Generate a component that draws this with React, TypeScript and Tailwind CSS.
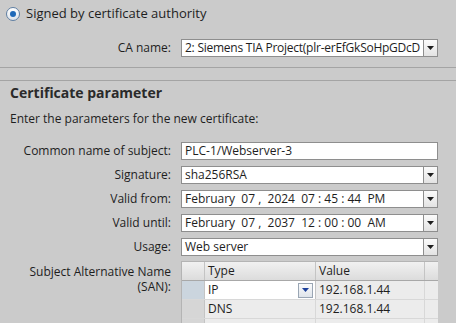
const font = { fontFamily: '"Open Sans", "Noto Sans", sans-serif' };

function Arrow({ color = "#1e1e1e" }: { color?: string }) {
  return (
    <svg width="7" height="4" viewBox="0 0 7 4">
      <path d="M0 0H7L3.5 4Z" fill={color} />
    </svg>
  );
}

function Field({ label, children }: { label: string; children: React.ReactNode }) {
  return (
    <div className="flex items-center h-[24px]">
      <div className="w-[181px] pr-[10px] text-right shrink-0">{label}</div>
      {children}
    </div>
  );
}

function TextBox({ value }: { value: string }) {
  return (
    <div className="w-[257px] h-[18px] bg-white border border-[#8e8e8e] flex items-center px-[3px] whitespace-pre overflow-hidden">
      {value}
    </div>
  );
}

function Select({ value, tight }: { value: string; tight?: boolean }) {
  return (
    <div className="w-[257px] h-[18px] bg-white border border-[#8e8e8e] flex items-stretch">
      <div className={`flex-1 flex items-center px-[3px] whitespace-pre overflow-hidden ${tight ? "tracking-[-0.25px]" : ""}`}>
        {value}
      </div>
      <div className="w-[14px] border-l border-[#8e8e8e] bg-gradient-to-b from-[#fbfbfb] to-[#e3e3e3] flex items-center justify-center">
        <Arrow />
      </div>
    </div>
  );
}

export default function App() {
  return (
    <div className="w-[456px] h-[323px] overflow-hidden bg-[#cbcbcb] text-[12px] text-[#1e1e1e] leading-none" style={font}>
      <div className="flex items-center h-[26px] pl-[6px] pt-[1px]">
        <div className="w-[14px] h-[14px] rounded-full border border-[#5f7fa3] bg-gradient-to-b from-[#ffffff] to-[#dde3ea] flex items-center justify-center">
          <div className="w-[6px] h-[6px] rounded-full bg-[#1f69b8]" />
        </div>
        <span className="ml-[6px] text-[13px]">Signed by certificate authority</span>
      </div>
      <div className="pt-[10px]">
        <Field label="CA name:">
          <Select value="2: Siemens TIA Project(plr-erEfGkSoHpGDcD" tight />
        </Field>
      </div>
      <div className="mt-[7px] border-t border-[#a4a4a4] h-[13px]" />
      <div className="border-t border-[#a4a4a4] pl-[10px] pt-[5px] h-[29px]">
        <div className="font-bold text-[14px] text-[#2a2a2a]">Certificate parameter</div>
      </div>
      <div className="pl-[10px] h-[30px] pt-[4px]">Enter the parameters for the new certificate:</div>
      <Field label="Common name of subject:">
        <TextBox value="PLC-1/Webserver-3" />
      </Field>
      <Field label="Signature:">
        <Select value="sha256RSA" />
      </Field>
      <Field label="Valid from:">
        <Select value="February  07 ,  2024  07 : 45 : 44  PM" />
      </Field>
      <Field label="Valid until:">
        <Select value="February  07 ,  2037  12 : 00 : 00  AM" />
      </Field>
      <Field label="Usage:">
        <Select value="Web server" />
      </Field>
      <div className="flex pt-[2px]">
        <div className="w-[181px] pr-[10px] text-right shrink-0 leading-[15px] pt-[3px]">
          Subject Alternative Name
          <br />
          (SAN):
        </div>
        <div className="w-[257px] border-l border-t border-[#b4b4b4] bg-[#ececec]">
          <div className="flex h-[19px] bg-gradient-to-b from-[#f1f1f1] to-[#dcdcdc] border-b border-[#a8a8a8]">
            <div className="w-[23px] border-r border-[#c4c4c4]" />
            <div className="w-[111px] border-r border-[#c4c4c4] flex items-center px-[3px]">Type</div>
            <div className="w-[109px] border-r border-[#c4c4c4] flex items-center px-[3px]">Value</div>
            <div className="flex-1" />
          </div>
          <div className="flex h-[19px] border-b border-[#d8d8d8]">
            <div className="w-[23px] bg-[#cbd5de] border-r border-[#c4c4c4]" />
            <div className="w-[111px] bg-white border-r border-[#c4c4c4] flex items-center pl-[3px] pr-[2px]">
              <span className="flex-1">IP</span>
              <div className="w-[15px] h-[15px] border border-[#9aa6b4] bg-gradient-to-b from-[#fafbfc] to-[#dfe4ea] flex items-center justify-center">
                <Arrow color="#1c3f9a" />
              </div>
            </div>
            <div className="w-[109px] border-r border-[#d8d8d8] flex items-center px-[3px]">192.168.1.44</div>
            <div className="flex-1" />
          </div>
          <div className="flex h-[19px] border-b border-[#d8d8d8]">
            <div className="w-[23px] bg-[#d6d6d6] border-r border-[#c4c4c4]" />
            <div className="w-[111px] border-r border-[#d8d8d8] flex items-center px-[3px]">DNS</div>
            <div className="w-[109px] border-r border-[#d8d8d8] flex items-center px-[3px]">192.168.1.44</div>
            <div className="flex-1" />
          </div>
          <div className="flex h-[19px]">
            <div className="w-[23px] bg-[#d6d6d6] border-r border-[#c4c4c4]" />
            <div className="w-[111px] border-r border-[#d8d8d8]" />
            <div className="w-[109px] border-r border-[#d8d8d8]" />
            <div className="flex-1" />
          </div>
        </div>
      </div>
    </div>
  );
}
